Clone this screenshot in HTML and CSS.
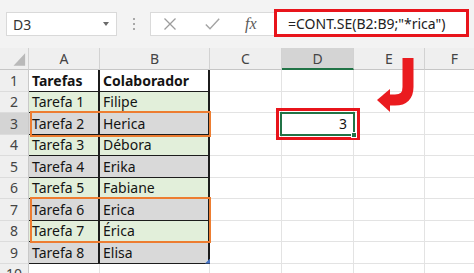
FILE: index.html
```html
<!DOCTYPE html>
<html lang="pt">
<head>
<meta charset="utf-8">
<title>CONT.SE</title>
<link rel="stylesheet" href="styles.css">
</head>
<body>
<div class="sheet">
  <div class="bar">
    <div class="namebox"><span>D3</span><span class="caret"></span></div>
    <div class="dots"><i></i><i></i><i></i></div>
    <div class="tools">
      <svg class="ico-x" width="12" height="12" viewBox="0 0 12 12"><path d="M0.5 0.5 L11.5 11.5 M11.5 0.5 L0.5 11.5" stroke="#9c9c9c" stroke-width="1.3" fill="none"/></svg>
      <svg class="ico-ok" width="15" height="12" viewBox="0 0 15 12"><path d="M0.8 6.5 L5 10.8 L14.2 0.8" stroke="#a4a4a4" stroke-width="1.4" fill="none"/></svg>
      <span class="fx">fx</span>
    </div>
    <div class="formula">=CONT.SE(B2:B9;"*rica")</div>
  </div>

  <div class="grid">
    <div class="ch corner"><svg width="29" height="22" viewBox="0 0 29 22"><path d="M14 18 L26 18 L26 5 Z" fill="#b9b9b9"/></svg></div>
    <div class="ch">A</div><div class="ch">B</div><div class="ch">C</div><div class="ch on">D</div><div class="ch">E</div><div class="ch">F</div>

    <div class="rh">1</div><div class="c t b">Tarefas</div><div class="c t b">Colaborador</div><div class="c"></div><div class="c"></div><div class="c"></div><div class="c"></div>
    <div class="rh">2</div><div class="c t g">Tarefa 1</div><div class="c t g">Filipe</div><div class="c"></div><div class="c"></div><div class="c"></div><div class="c"></div>
    <div class="rh on">3</div><div class="c t s">Tarefa 2</div><div class="c t s">Herica</div><div class="c"></div><div class="c num">3</div><div class="c"></div><div class="c"></div>
    <div class="rh">4</div><div class="c t g">Tarefa 3</div><div class="c t g">Débora</div><div class="c"></div><div class="c"></div><div class="c"></div><div class="c"></div>
    <div class="rh">5</div><div class="c t s">Tarefa 4</div><div class="c t s">Erika</div><div class="c"></div><div class="c"></div><div class="c"></div><div class="c"></div>
    <div class="rh">6</div><div class="c t g">Tarefa 5</div><div class="c t g">Fabiane</div><div class="c"></div><div class="c"></div><div class="c"></div><div class="c"></div>
    <div class="rh">7</div><div class="c t s">Tarefa 6</div><div class="c t s">Erica</div><div class="c"></div><div class="c"></div><div class="c"></div><div class="c"></div>
    <div class="rh">8</div><div class="c t g">Tarefa 7</div><div class="c t g">Érica</div><div class="c"></div><div class="c"></div><div class="c"></div><div class="c"></div>
    <div class="rh">9</div><div class="c t s">Tarefa 8</div><div class="c t s">Elisa</div><div class="c"></div><div class="c"></div><div class="c"></div><div class="c"></div>
    <div class="rh">10</div><div class="c"></div><div class="c"></div><div class="c"></div><div class="c"></div><div class="c"></div><div class="c"></div>

    <div class="ovl orange row3"></div>
    <div class="ovl orange row78"></div>
    <div class="ovl redbox"></div>
    <div class="ovl sel"><span class="fill"></span></div>
    <div class="ovl resize"></div>
  </div>

  <svg class="arrow" width="50" height="62" viewBox="0 0 50 62">
    <path d="M38 3 V32 Q38 45 25 45 H19" stroke="#ea1b1f" stroke-width="11" fill="none"/>
    <path d="M7 45 L20 34 L20 57 Z" fill="#ea1b1f"/>
  </svg>
</div>
</body>
</html>
```

FILE: styles.css
```css
* { box-sizing: border-box; }
html, body { margin: 0; padding: 0; }
body {
  width: 474px;
  height: 273px;
  overflow: hidden;
  background: #ffffff;
  font-family: "Noto Sans", "Liberation Sans", sans-serif;
  color: #1a1a1a;
}
.sheet { position: relative; width: 474px; height: 273px; overflow: hidden; }

/* formula bar */
.bar {
  display: flex;
  align-items: flex-start;
  height: 48px;
  padding-top: 12px;
  background: #f3f3f3;
}
.namebox {
  margin-left: 6px;
  width: 111px;
  height: 24px;
  background: #fff;
  border: 1px solid #d9d9d9;
  display: flex;
  align-items: center;
  justify-content: space-between;
  padding: 0 7px 0 6px;
  font-size: 14px;
  color: #333;
}
.caret {
  width: 0; height: 0;
  border-left: 3.5px solid transparent;
  border-right: 3.5px solid transparent;
  border-top: 4px solid #6a6a6a;
}
.dots {
  margin-left: 16px;
  height: 24px;
  display: flex;
  flex-direction: column;
  justify-content: center;
  gap: 3px;
}
.dots i { display: block; width: 2px; height: 2px; background: #a8a8a8; }
.tools {
  margin-left: 15px;
  width: 124px;
  height: 24px;
  background: #fff;
  border: 1px solid #dadada;
  border-right: none;
  display: flex;
  align-items: center;
  padding-left: 13px;
}
.ico-ok { margin-left: 29px; }
.fx {
  margin-left: 25px;
  font-family: "Liberation Serif", serif;
  font-style: italic;
  font-size: 16px;
  color: #5a5a5a;
  line-height: 1;
}
.formula {
  margin-top: -3px;
  width: 195px;
  height: 28px;
  background: #fff;
  border: 3px solid #e8141b;
  display: flex;
  align-items: center;
  padding-left: 11px;
  font-size: 14px;
  color: #222;
  white-space: nowrap;
}

/* grid */
.grid {
  position: relative;
  display: grid;
  grid-template-columns: 29px 71px 110px 72px 72px 71px 60px;
  grid-template-rows: 22px repeat(10, 21.5px);
  font-size: 14px;
}
.ch, .rh, .c {
  display: flex;
  align-items: center;
  white-space: nowrap;
  overflow: hidden;
}
.ch {
  justify-content: center;
  background: #efefef;
  border-right: 1px solid #d2d2d2;
  border-bottom: 1px solid #c6c6c6;
  color: #444;
}
.ch.corner { align-items: stretch; }
.ch.on { background: #d4d4d4; border-bottom: 2px solid #217346; }
.rh {
  justify-content: center;
  background: #efefef;
  border-right: 1px solid #c9c9c9;
  border-bottom: 1px solid #dcdcdc;
  color: #444;
}
.rh.on { background: #d4d4d4; }
.c {
  padding-left: 3px;
  border-right: 1px solid #e3e3e3;
  border-bottom: 1px solid #e3e3e3;
  color: #141414;
}
.c.t {
  border-right: 2px solid #1c1c1c;
  border-bottom: 1.5px solid #1c1c1c;
}
.c.b { font-weight: 700; }
.c.g { background: #e2efda; }
.c.s { background: #d9d9d9; }
.c.num { justify-content: flex-end; padding-right: 6px; }

/* overlays */
.ovl { position: absolute; pointer-events: none; }
.orange { border: 2px solid #ed7d31; }
.row3 { grid-row: 4 / 5; grid-column: 2 / 4; top: -2px; bottom: -2px; left: 1px; right: -1px; }
.row78 { grid-row: 8 / 10; grid-column: 2 / 4; top: -2px; bottom: -1px; left: 1px; right: -1px; }
.redbox { grid-row: 4 / 5; grid-column: 5 / 6; top: -5px; bottom: -5.5px; left: -6px; right: -6px; border: 3px solid #e8141b; }
.sel { grid-row: 4 / 5; grid-column: 5 / 6; top: -1px; bottom: -1px; left: -2px; right: -1px; border: 2px solid #217346; }
.sel .fill {
  position: absolute;
  right: -4px; bottom: -4px;
  width: 6px; height: 6px;
  background: #217346;
  border: 1px solid #fff;
}
.resize {
  grid-row: 10 / 11; grid-column: 3 / 4;
  right: 0; bottom: 0;
  width: 5px; height: 5px;
  background: #4472c4;
  clip-path: polygon(100% 0, 100% 100%, 0 100%);
}
.arrow { position: absolute; left: 370px; top: 55px; }
```
